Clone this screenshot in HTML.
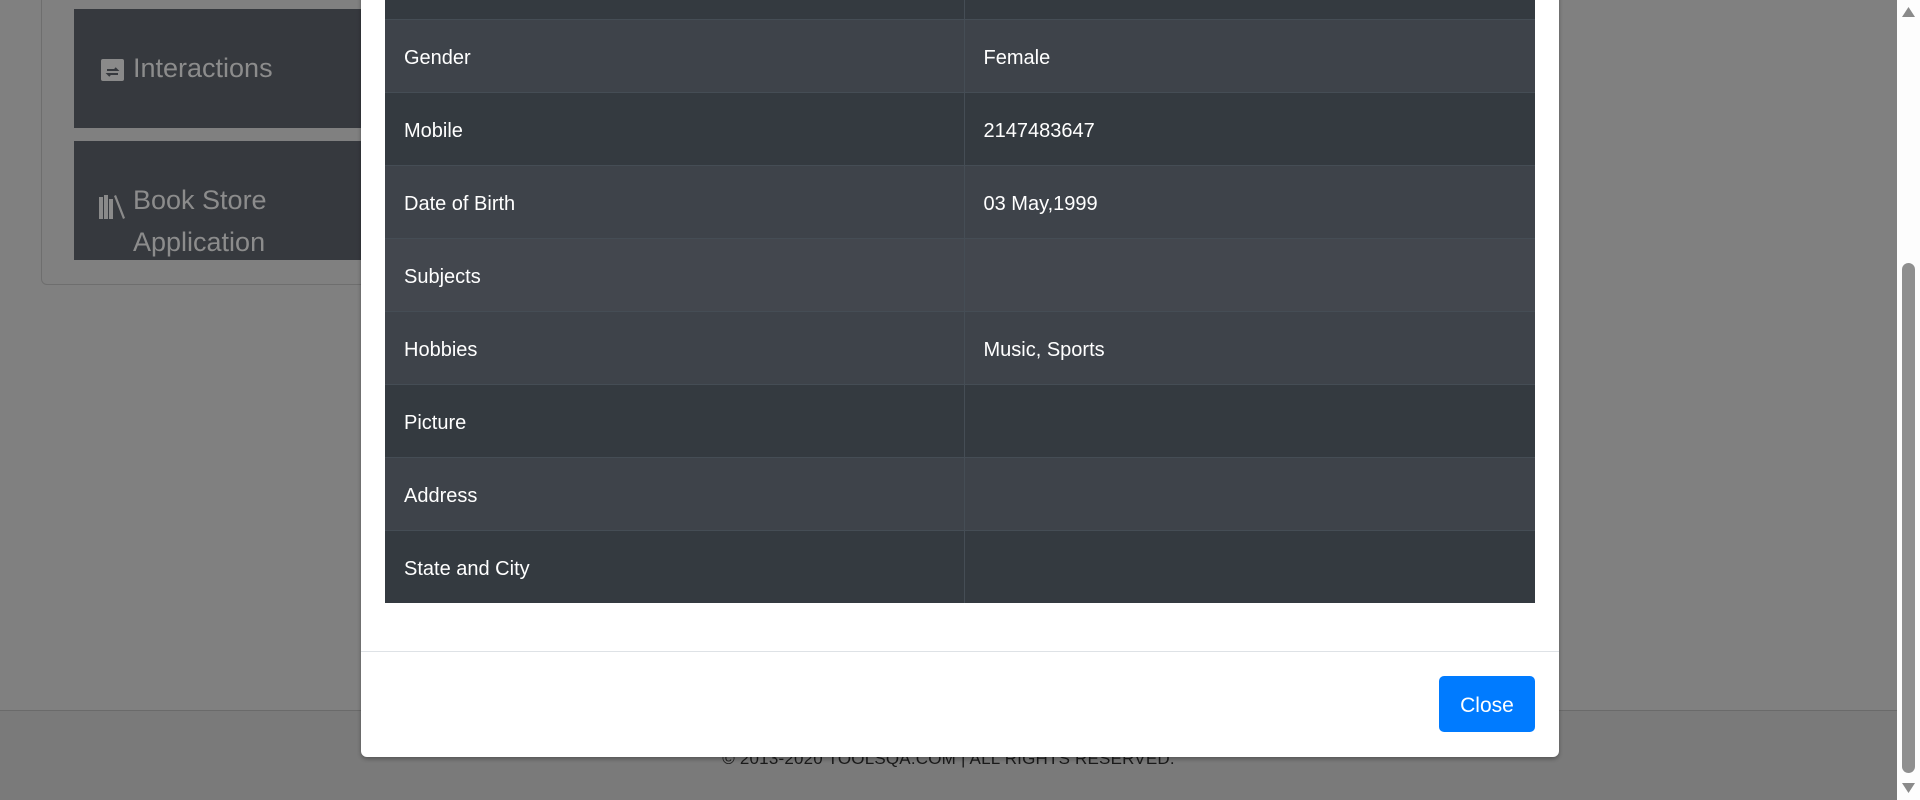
<!DOCTYPE html>
<html><head><meta charset="utf-8"><style>
*{margin:0;padding:0;box-sizing:border-box}
body{width:1920px;height:800px;overflow:hidden;background:#808080;font-family:"Liberation Sans",sans-serif;position:relative}
.abs{position:absolute}
.outer{left:41px;top:-20px;width:340px;height:305px;border:1px solid #6e6e6e;border-radius:6px}
.card{left:74px;width:300px;background:#36393e;color:#8c8c8c;font-size:27px}
.foot{left:0;top:710px;width:1897px;height:90px;background:#7a7a7a;border-top:1px solid #6a6a6a}
.ftext{left:0;width:1897px;top:749px;text-align:center;font-size:17px;color:#1a1a1a;letter-spacing:0.2px}
.modal{left:361px;top:-10px;width:1198px;height:767px;background:#fff;border-radius:0 0 6px 6px;box-shadow:0 2px 4px rgba(0,0,0,.3)}
table{position:absolute;left:24px;top:0;width:1150px;border-collapse:collapse;color:#fff;font-size:20px}
td{height:73px;padding:6px 19px 0;border-top:1px solid #454d55;vertical-align:middle}
td:first-child{width:579px;border-right:1px solid #454d55}
tr.l td{background:#3e434a}
tr.d td{background:#343a40}
tr.h td{background:#43474e}
.mf{left:0;top:661px;width:1198px;border-top:1px solid #dee2e6}
.btn{left:1078px;top:686px;width:96px;height:56px;background:#007bff;color:#fff;border-radius:5px;font-size:21px;text-align:center;line-height:60px}
.sb{left:1897px;top:0;width:23px;height:800px;background:#fdfdfd}
</style></head><body>
<div class="abs outer"></div>
<div class="abs card" style="top:9px;height:119px">
 <div class="abs" style="left:27px;top:50px;width:23px;height:22px;background:#8a8a8a;border-radius:2px"><svg width="23" height="22" viewBox="0 0 23 22"><path d="M6 9h10l-2-2M17 13H7l2 2" stroke="#36393e" stroke-width="2" fill="none"/></svg></div>
 <div class="abs" style="left:59px;top:44px">Interactions</div>
</div>
<div class="abs card" style="top:141px;height:119px;overflow:hidden">
 <svg class="abs" style="left:25px;top:52px" width="28" height="26" viewBox="0 0 28 26"><g fill="#8a8a8a"><rect x="0" y="4" width="4" height="22"/><rect x="5" y="2" width="4" height="24"/><rect x="10" y="6" width="4" height="20"/><path d="M15 3l2-1 9 23-2 1z"/></g></svg>
 <div class="abs" style="left:59px;line-height:42px;top:38px">Book Store<br>Application</div>
</div>
<div class="abs foot"></div>
<div class="abs ftext">© 2013-2020 TOOLSQA.COM | ALL RIGHTS RESERVED.</div>
<div class="abs modal">
<table>
<tr class="d"><td style="height:29px;border-top:none"></td><td style="height:29px;border-top:none"></td></tr>
<tr class="l"><td>Gender</td><td>Female</td></tr>
<tr class="d"><td>Mobile</td><td>2147483647</td></tr>
<tr class="l"><td>Date of Birth</td><td>03 May,1999</td></tr>
<tr class="h"><td>Subjects</td><td></td></tr>
<tr class="l"><td>Hobbies</td><td>Music, Sports</td></tr>
<tr class="d"><td>Picture</td><td></td></tr>
<tr class="l"><td>Address</td><td></td></tr>
<tr class="d"><td>State and City</td><td></td></tr>
</table>
<div class="abs mf"></div>
<div class="abs btn">Close</div>
</div>
<div class="abs sb">
 <svg class="abs" style="left:4px;top:6px" width="15" height="12"><path d="M7.5 1L14 11H1z" fill="#8a8a8a"/></svg>
 <div class="abs" style="left:5px;top:263px;width:13px;height:510px;background:#8f8f8f;border-radius:7px"></div>
 <svg class="abs" style="left:4px;top:782px" width="15" height="12"><path d="M1 1h13L7.5 11z" fill="#8a8a8a"/></svg>
</div>
</body></html>
